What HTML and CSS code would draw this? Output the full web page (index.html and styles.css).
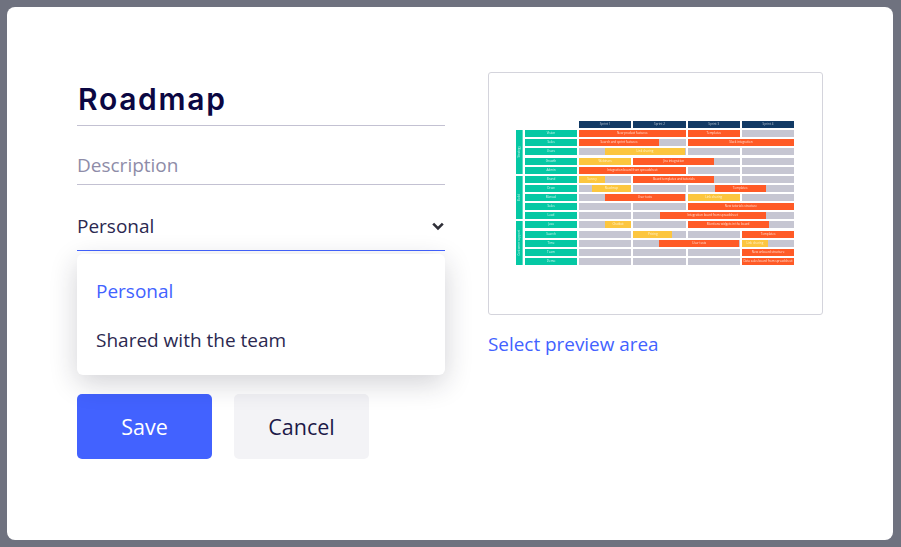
FILE: index.html
```
<!DOCTYPE html>
<html lang="en">
<head>
<meta charset="utf-8">
<title>Roadmap</title>
<link rel="stylesheet" href="styles.css">
</head>
<body>
<main class="modal">
  <section class="form">
    <h1 class="title">Roadmap</h1>
    <div class="field desc">Description</div>
    <div class="select-wrap">
      <div class="field select">
        <span>Personal</span>
        <svg class="chev" width="12" height="9" viewBox="0 0 12 9"><path d="M1.2 1.7 6 6.5 10.8 1.7" fill="none" stroke="#2f2f38" stroke-width="2.6"/></svg>
      </div>
      <ul class="menu">
        <li class="opt active">Personal</li>
        <li class="opt">Shared with the team</li>
      </ul>
    </div>
    <div class="actions">
      <button class="btn primary">Save</button>
      <button class="btn ghost">Cancel</button>
    </div>
  </section>
  <section class="side">
    <div class="preview">
      <div class="rm">
        <div class="rm-head">
          <div class="h">Sprint 1</div><div class="h">Sprint 2</div><div class="h">Sprint 3</div><div class="h">Sprint 4</div>
        </div>
        <div class="grp">
          <div class="band"><span>Strategy</span></div>
          <div class="rows">
            <div class="row"><div class="lab">Vision</div><div class="cell s2"><div class="bar o" style="width:100%">New product features</div></div><div class="cell"><div class="bar o" style="width:100%">Templates</div></div><div class="cell"></div></div>
            <div class="row"><div class="lab">Sales</div><div class="cell s2"><div class="bar o" style="width:80px">Search and sprint features</div></div><div class="cell s2"><div class="bar o" style="width:100%">Slack integration</div></div></div>
            <div class="row"><div class="lab">Users</div><div class="cell s2"><div class="bar y" style="margin-left:26px;width:80px">Link sharing</div></div><div class="cell"></div><div class="cell"></div></div>
            <div class="row"><div class="lab">Growth</div><div class="cell"><div class="bar y" style="width:100%">Webinars</div></div><div class="cell s2"><div class="bar o" style="width:81px">Jira integration</div></div><div class="cell"></div></div>
            <div class="row"><div class="lab">Admin</div><div class="cell s2"><div class="bar o" style="width:100%">Integration board from spreadsheet</div></div><div class="cell"></div><div class="cell"></div></div>
          </div>
        </div>
        <div class="grp">
          <div class="band"><span>Build</span></div>
          <div class="rows">
            <div class="row"><div class="lab">Brand</div><div class="cell"><div class="bar y" style="width:26px">Survey</div></div><div class="cell s2"><div class="bar o" style="width:81px">Board templates and tutorials</div></div><div class="cell"></div></div>
            <div class="row"><div class="lab">Draw</div><div class="cell"><div class="bar y" style="margin-left:13px;width:39px">Roadmap</div></div><div class="cell"></div><div class="cell s2"><div class="bar o" style="margin-left:27px;width:51px">Templates</div></div></div>
            <div class="row"><div class="lab">Manual</div><div class="cell s2"><div class="bar o" style="margin-left:26px;width:80px">User tests</div></div><div class="cell"><div class="bar y" style="width:100%">Link sharing</div></div><div class="cell"></div></div>
            <div class="row"><div class="lab">Sales</div><div class="cell"></div><div class="cell"></div><div class="cell s2"><div class="bar o" style="width:100%">New tutorials structure</div></div></div>
            <div class="row"><div class="lab">Lead</div><div class="cell"></div><div class="cell"></div><div class="cell s2 wide"><div class="bar o" style="margin-left:-28px;width:106px">Integration board from spreadsheet</div></div></div>
          </div>
        </div>
        <div class="grp">
          <div class="band"><span>Customer support</span></div>
          <div class="rows">
            <div class="row"><div class="lab">Java</div><div class="cell"><div class="bar y" style="margin-left:26px;width:26px">Chatbot</div></div><div class="cell"></div><div class="cell s2"><div class="bar o" style="width:81px">Mentions widgets in the board</div></div></div>
            <div class="row"><div class="lab">Search</div><div class="cell"></div><div class="cell"><div class="bar y" style="width:39px">Pricing</div></div><div class="cell"></div><div class="cell"><div class="bar o" style="width:100%">Templates</div></div></div>
            <div class="row"><div class="lab">Time</div><div class="cell"></div><div class="cell s2"><div class="bar o" style="margin-left:26px;width:80px">User tests</div></div><div class="cell"><div class="bar y" style="width:26px">Link sharing</div></div></div>
            <div class="row"><div class="lab">Team</div><div class="cell"></div><div class="cell"></div><div class="cell"></div><div class="cell"><div class="bar o" style="width:100%">New onboard structure</div></div></div>
            <div class="row"><div class="lab">Demo</div><div class="cell"></div><div class="cell"></div><div class="cell"></div><div class="cell"><div class="bar o" style="width:100%">Data sales board from spreadsheet</div></div></div>
          </div>
        </div>
      </div>
    </div>
    <a class="link">Select preview area</a>
  </section>
</main>
</body>
</html>
```
FILE: styles.css
```
* { box-sizing: border-box; }
html, body { height: 100%; }
body {
  margin: 0;
  padding: 7px 8px 7px 7px;
  background: #6f727f;
  font-family: "Open Sans", "Noto Sans", sans-serif;
  color: #2b2850;
  overflow: hidden;
}
.modal {
  height: 533px;
  background: #fff;
  border-radius: 8px;
  display: flex;
  gap: 43px;
  padding: 65px 70px 0;
}
.form { width: 368px; }
.title {
  margin: 0;
  height: 54px;
  padding-top: 7px;
  padding-left: 1px;
  font: 600 30px/40px Inter, sans-serif;
  letter-spacing: 1.7px;
  color: #0b0742;
  border-bottom: 1px solid #c3c1d2;
}
.field { font-size: 19px; line-height: 28px; }
.desc {
  height: 59px;
  padding-top: 25px;
  color: #8e8ca8;
  border-bottom: 1px solid #c3c1d2;
}
.select-wrap { position: relative; }
.select {
  height: 66px;
  padding: 27px 1px 0 0;
  display: flex;
  justify-content: space-between;
  align-items: flex-start;
  border-bottom: 1px solid #4262ff;
}
.chev { margin-top: 10px; }
.menu {
  position: absolute;
  z-index: 2;
  left: 0;
  right: 0;
  top: 69px;
  margin: 0;
  padding: 13px 0 10px;
  list-style: none;
  background: #fff;
  border-radius: 6px;
  box-shadow: 0 8px 28px rgba(30, 30, 50, .2);
}
.opt {
  height: 49px;
  padding: 0 19px;
  line-height: 49px;
  font-size: 19px;
}
.opt.active { color: #4262ff; }
.actions {
  display: flex;
  gap: 22px;
  margin-top: 143px;
}
.btn {
  width: 135px;
  height: 65px;
  border: 0;
  border-radius: 5px;
  font-family: inherit;
  font-size: 21.5px;
}
.primary { background: #4262ff; color: #fff; }
.ghost { background: #f3f3f6; color: #1c1848; }
.side { width: 335px; }
.preview {
  height: 243px;
  border: 1px solid #d4d4dc;
  border-radius: 3px;
  padding: 48px 0 0 27px;
}
.link {
  display: block;
  margin-top: 15px;
  font-size: 18.9px;
  line-height: 28px;
  color: #4262ff;
}
.rm {
  width: 278px;
  display: flex;
  flex-direction: column;
  gap: 2.1px;
  filter: blur(.35px);
}
.rm-head {
  display: grid;
  grid-template-columns: repeat(4, 52.3px);
  gap: 2px;
  margin-left: 63px;
}
.h {
  height: 7px;
  background: #123a65;
  color: #b9c4d2;
  font-size: 3px;
  line-height: 7px;
  text-align: center;
}
.grp { display: flex; gap: 2.5px; }
.band {
  width: 6.5px;
  flex: none;
  background: #05c8a4;
  border-right: 1px solid #5fdcc4;
  display: flex;
  align-items: center;
  justify-content: center;
}
.band span {
  writing-mode: vertical-rl;
  transform: rotate(180deg);
  color: #c6f2e8;
  font-size: 3px;
  white-space: nowrap;
}
.rows { display: flex; flex-direction: column; gap: 2.15px; }
.row {
  height: 7px;
  display: grid;
  grid-template-columns: 52px repeat(4, 52.3px);
  gap: 2px;
}
.lab, .bar {
  height: 7px;
  font-size: 3px;
  line-height: 7px;
  text-align: center;
  white-space: nowrap;
  overflow: hidden;
  color: #fff;
}
.lab { background: #05c8a4; color: #d8f7f0; }
.cell { background: #c6c6d2; min-width: 0; }
.s2 { grid-column: span 2; }
.wide { overflow: visible; }
.o { background: #ff5a26; color: #ffe0d4; }
.y { background: #fcc63f; color: #fff3d0; }
```
